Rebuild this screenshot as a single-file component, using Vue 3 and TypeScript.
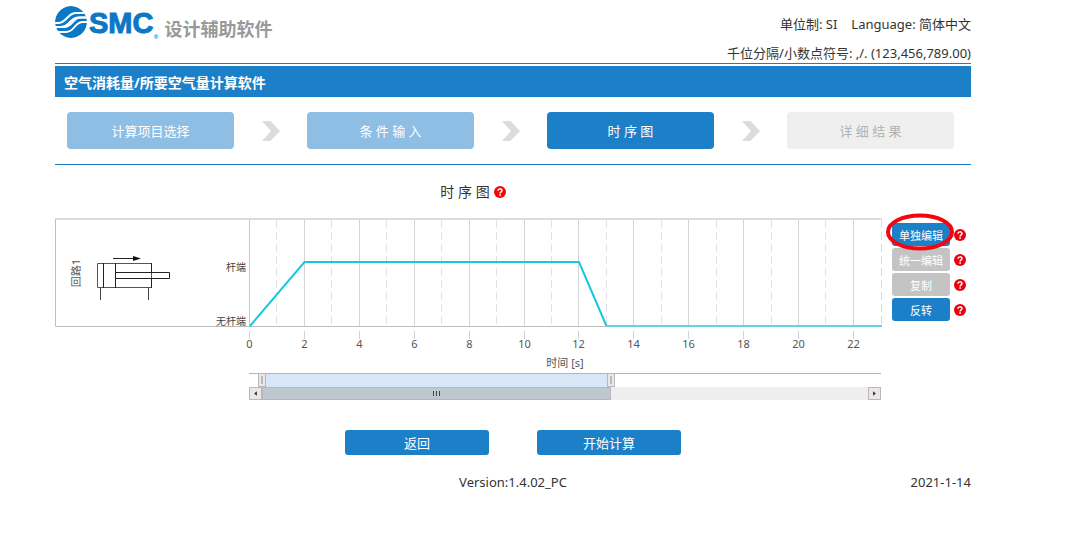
<script setup lang="ts">
import { ref } from 'vue'

interface Step { label: string; state: 'done' | 'active' | 'pending' }
interface Action { label: string; disabled: boolean; marked: boolean }

const steps: Step[] = [
  { label: '计算项目选择', state: 'done' },
  { label: '条 件 输 入', state: 'done' },
  { label: '时 序 图', state: 'active' },
  { label: '详 细 结 果', state: 'pending' },
]

const actions: Action[] = [
  { label: '单独编辑', disabled: false, marked: true },
  { label: '统一编辑', disabled: true, marked: false },
  { label: '复制', disabled: true, marked: false },
  { label: '反转', disabled: false, marked: false },
]

const originX = 195
const unit = 27.45
const seconds = Array.from({ length: 22 }, (_, i) => i + 1)
const ticks = Array.from({ length: 12 }, (_, i) => i * 2)
const xAt = (s: number): number => Math.round(originX + s * unit) - 0.5

const range = ref({ start: 13, end: 362, total: 632 })
const pct = (v: number): string => `${(v / range.value.total) * 100}%`
</script>

<template>
  <div class="page">
    <header class="header">
      <div class="brand">
        <svg class="emblem" viewBox="0 0 32 32" aria-hidden="true">
          <circle cx="16" cy="16" r="16" fill="#0a78c4" />
          <g fill="none" stroke="#fff" stroke-width="2">
            <path d="M-1 17H3C12 17 12 7 21 7H30" />
            <path d="M-1 21H6C15 21 15 11.500 23 11.500H33" />
            <path d="M-1 21H9C18 21 17 11.500 26 11.500H33" />
            <path d="M1 26H11C20 26 19 16 28 16H33" />
          </g>
        </svg>
        <span class="brand-name">SMC</span><span class="reg">®</span>
        <span class="product">设计辅助软件</span>
      </div>
      <div class="settings">
        <div class="settings-row">
          <a href="#">单位制: SI</a>
          <a href="#">Language: 简体中文</a>
        </div>
        <div class="settings-row"><a href="#">千位分隔/小数点符号: ,/. (123,456,789.00)</a></div>
      </div>
    </header>

    <h1 class="bar">空气消耗量/所要空气量计算软件</h1>

    <nav class="steps">
      <template v-for="(step, i) in steps" :key="step.label">
        <svg v-if="i > 0" class="chevron" viewBox="0 0 18 20" aria-hidden="true">
          <path d="M0 0H8.500L18 10L8.500 20H0L9 10Z" fill="#dcdcdc" />
        </svg>
        <button type="button" class="step" :class="step.state" :disabled="step.state === 'pending'">{{ step.label }}</button>
      </template>
    </nav>

    <main>
      <div class="title">
        <h2>时 序 图</h2>
        <button type="button" class="help" aria-label="?">
          <svg viewBox="0 0 12 12"><circle cx="6" cy="6" r="6" fill="#f00808" /><path d="M4 4.700C4 2.300 8 2.300 8 4.500C8 5.900 6.100 5.800 6.100 7.400" fill="none" stroke="#fff" stroke-width="1.500" /><rect x="5.300" y="8.300" width="1.600" height="1.500" fill="#fff" /></svg>
        </button>
      </div>

      <div class="workspace">
        <div class="chart">
          <svg class="plot" viewBox="0 0 827 155">
            <path d="M0 1H827" stroke="#dcdcdc" stroke-width="2" />
            <path d="M0.500 1V108.500H827" fill="none" stroke="#bfbfbf" />
            <line
              v-for="s in seconds" :key="s" :x1="xAt(s)" :x2="xAt(s)" y1="2" y2="108"
              :stroke="s % 2 ? '#e2e2e2' : '#d4d4d4'" :stroke-dasharray="s % 2 ? '8 4' : undefined"
            />
            <path d="M826.500 2V108" stroke="#dcdcdc" stroke-dasharray="8 4" />
            <path d="M194.500 1V108" stroke="#c3cbd3" />

            <text class="lane" transform="translate(25 55) rotate(-90)" text-anchor="middle">回路1</text>

            <g fill="none" stroke="#222">
              <path d="M42.500 45.500H96.500V69.500H42.500Z" stroke="#555" />
              <path d="M48.500 45V70M60.500 45V70M96.500 45V54M96.500 61V70" />
              <path d="M60.500 54.500H114.500V60.500H60.500" />
              <path d="M45.500 70V82M93.500 70V82" stroke="#444" />
              <path d="M58 40.500H80" />
            </g>
            <path d="M78 38L86 40.500L78 43Z" fill="#111" />

            <text class="state" x="191" y="53" text-anchor="end">杆端</text>
            <text class="state" x="191" y="107" text-anchor="end">无杆端</text>

            <path d="M552 108H827" stroke="#5fd5e1" stroke-width="2" />
            <path d="M195 108L249.500 44H524L551.500 108" fill="none" stroke="#15c8dc" stroke-width="2" />

            <g v-for="t in ticks" :key="t">
              <line :x1="xAt(t)" :x2="xAt(t)" y1="113" y2="121" stroke="#c8d5e2" />
              <text class="label" :x="xAt(t)" y="130" text-anchor="middle">{{ t }}</text>
            </g>
            <text class="label" x="510" y="149" text-anchor="middle">时间 [s]</text>
          </svg>

          <div class="navigator">
            <div class="overview">
              <div class="selection" :style="{ left: pct(range.start), width: pct(range.end - range.start) }">
                <button type="button" class="handle from" aria-label="0"></button>
                <button type="button" class="handle to" aria-label="13"></button>
              </div>
            </div>
            <div class="scrollbar">
              <button type="button" class="arrow" aria-label="‹"><svg viewBox="0 0 12 12"><path d="M7.500 3.500V8.500L4.500 6Z" /></svg></button>
              <div class="thumb" :style="{ left: pct(range.start), width: pct(range.end - range.start) }"><i></i><i></i><i></i></div>
              <button type="button" class="arrow" aria-label="›"><svg viewBox="0 0 12 12"><path d="M4.500 3.500V8.500L7.500 6Z" /></svg></button>
            </div>
          </div>
        </div>

        <div class="actions">
          <div v-for="a in actions" :key="a.label" class="action">
            <button type="button" class="small" :disabled="a.disabled">{{ a.label }}</button>
            <button type="button" class="help" aria-label="?">
              <svg viewBox="0 0 12 12"><circle cx="6" cy="6" r="6" fill="#e8000d" /><path d="M4 4.700C4 2.300 8 2.300 8 4.500C8 5.900 6.100 5.800 6.100 7.400" fill="none" stroke="#fff" stroke-width="1.500" /><rect x="5.300" y="8.300" width="1.600" height="1.500" fill="#fff" /></svg>
            </button>
            <svg v-if="a.marked" class="ring" viewBox="0 0 68 38" aria-hidden="true">
              <ellipse cx="34" cy="19" rx="32" ry="16.500" fill="none" stroke="#f5050f" stroke-width="4" />
            </svg>
          </div>
        </div>
      </div>

      <div class="commands">
        <button type="button" class="command">返回</button>
        <button type="button" class="command">开始计算</button>
      </div>
    </main>

    <footer class="footer">
      <span class="version">Version:1.4.02_PC</span>
      <time datetime="2021-01-14">2021-1-14</time>
    </footer>
  </div>
</template>

<style>
body {
  background: #fff;
}
</style>

<style scoped>
.page {
  box-sizing: border-box;
  padding: 0 107px 32px 55px;
  font: 13px/20px "Noto Sans", "Noto Sans CJK SC", sans-serif;
  color: #333;
}
button {
  padding: 0;
  border: 0;
  font: inherit;
  cursor: pointer;
}
a {
  color: inherit;
  text-decoration: none;
}
.header {
  display: flex;
  justify-content: space-between;
  height: 63px;
  border-bottom: 1px solid #1c80c9;
}
.brand {
  display: flex;
  align-items: flex-start;
  padding-top: 6px;
}
.emblem {
  width: 32px;
  height: 32px;
  border-radius: 50%;
}
.brand-name {
  margin-left: 2px;
  font: 700 29px/34px "Liberation Sans", sans-serif;
  color: #0a78c4;
  -webkit-text-stroke: 1px #0a78c4;
}
.reg {
  align-self: flex-end;
  margin-bottom: 22px;
  font-size: 6px;
  line-height: 8px;
  color: #0a78c4;
}
.product {
  margin-left: 6px;
  padding-top: 10px;
  font-size: 18px;
  font-weight: 700;
  line-height: 26px;
  color: #999;
}
.settings {
  display: flex;
  flex-direction: column;
  gap: 9px;
  padding-top: 14px;
  white-space: nowrap;
}
.settings-row {
  display: flex;
  justify-content: flex-end;
  gap: 14px;
}
.bar {
  margin: 2px 0 0;
  padding: 2px 9px 0;
  font-size: 14px;
  font-weight: 700;
  line-height: 29px;
  color: #fff;
  background: #1c80c9;
}
.steps {
  display: flex;
  align-items: center;
  justify-content: space-between;
  padding: 15px 17px 15px 12px;
  border-bottom: 1px solid #1c80c9;
}
.step {
  width: 167px;
  height: 37px;
  border-radius: 4px;
  color: #fff;
}
.done {
  background: #8ebee4;
}
.active {
  background: #1c80c9;
}
.pending {
  color: #b2b2b2;
  background: #efefef;
}
.chevron {
  width: 18px;
  height: 20px;
}
.title {
  display: flex;
  align-items: center;
  justify-content: center;
  gap: 4px;
  padding: 17px 0 16px;
  margin-right: 80px;
}
h2 {
  margin: 0;
  font-size: 14px;
  font-weight: 400;
  line-height: 20px;
}
.help {
  width: 12px;
  height: 12px;
  background: none;
}
.help svg,
.plot,
.arrow svg {
  display: block;
  width: 100%;
}
.workspace {
  display: flex;
  align-items: flex-start;
  gap: 10px;
}
.chart {
  flex: 1;
  min-width: 0;
}
.lane {
  font-size: 11px;
  fill: #555;
  text-rendering: geometricPrecision;
}
.label {
  font-size: 11px;
  fill: #555;
}
.state {
  font-size: 10px;
  fill: #444;
}
.navigator {
  margin-left: 194px;
  margin-right: 1px;
}
.overview {
  position: relative;
  height: 13px;
  border-top: 1px solid #b4b4ba;
}
.selection {
  position: absolute;
  top: 0;
  bottom: 0;
  background: #d7e7f8;
}
.handle {
  position: absolute;
  top: -1px;
  box-sizing: border-box;
  width: 8px;
  height: 14px;
  border: 1px solid #bab7bb;
  background: linear-gradient(#bbb, #bbb) center / 2px 8px no-repeat #ebe7e8;
}
.from {
  left: -4px;
}
.to {
  right: -4px;
}
.scrollbar {
  position: relative;
  display: flex;
  justify-content: space-between;
  height: 13px;
  background: #eee;
}
.arrow {
  box-sizing: border-box;
  width: 13px;
  height: 13px;
  border: 1px solid #bab7bb;
  background: #ebe7e8;
}
.arrow path {
  fill: #333;
}
.thumb {
  position: absolute;
  top: 0;
  bottom: 0;
  box-sizing: border-box;
  display: flex;
  align-items: center;
  justify-content: center;
  gap: 2px;
  border: 1px solid #b4b9c0;
  background: #bfc8d1;
}
.thumb i {
  width: 1px;
  height: 5px;
  background: #444;
}
.actions {
  display: flex;
  flex-direction: column;
  gap: 2px;
  width: 79px;
  padding-top: 5px;
}
.action {
  position: relative;
  display: flex;
  align-items: center;
  gap: 4px;
}
.small {
  width: 58px;
  height: 23px;
  padding-top: 2px;
  border-radius: 3px;
  font-size: 11px;
  color: #fff;
  background: #1c80c9;
}
.small:disabled {
  background: #c4c4c4;
}
.ring {
  position: absolute;
  left: -6px;
  top: -10px;
  z-index: 1;
  width: 68px;
  height: 38px;
  pointer-events: none;
}
.commands {
  display: flex;
  justify-content: center;
  gap: 48px;
  padding: 30px 0 17px;
}
.command {
  width: 144px;
  height: 25px;
  border-radius: 3px;
  color: #fff;
  background: #1c80c9;
}
.footer {
  display: grid;
  grid-template-columns: 1fr auto 1fr;
}
.version {
  grid-column: 2;
}
.footer time {
  text-align: right;
}
</style>
